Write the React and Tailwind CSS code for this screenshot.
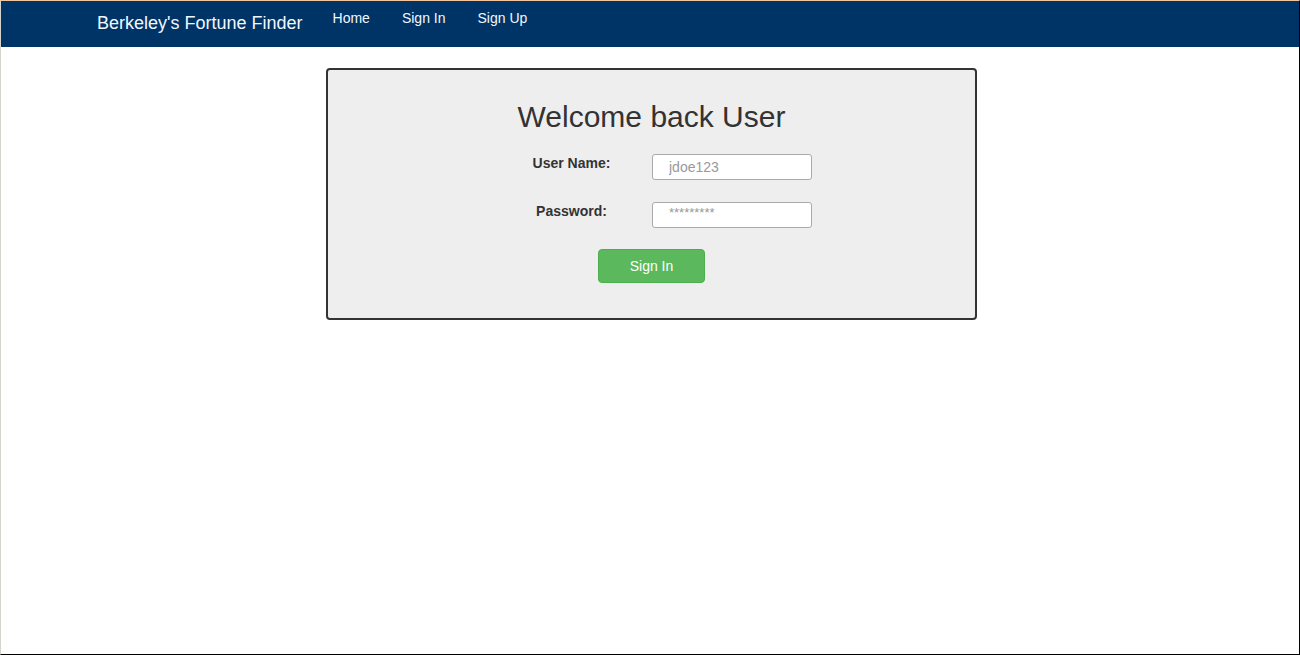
export default function App() {
  return (
    <div
      className="h-[655px] border-t border-l border-r border-b border-t-[#f2c49e] border-l-[#d6d2ce] border-r-black border-b-black bg-white text-[#333]"
      style={{ fontFamily: '"Liberation Sans", Arial, sans-serif' }}
    >
      {/* ================= NAVBAR ================= */}
      <nav className="h-[46px] bg-[#003366] flex items-start">
        <div className="pl-[96px] pt-[11px] text-[18px] leading-[22px] text-[#f0f8ff]">
          Berkeley's Fortune Finder
        </div>
        <div className="flex gap-[32px] ml-[30px] pt-[7px] text-[14px] leading-[20px] text-[#f0f8ff]">
          <span>Home</span>
          <span>Sign In</span>
          <span>Sign Up</span>
        </div>
      </nav>

      {/* ================= SIGN IN CARD ================= */}
      <div className="pl-[3px] pt-[21px]">
        <div className="mx-auto w-[651px] h-[252px] bg-[#eeeeee] border-2 border-[#333] rounded-[4px] pt-[30px]">
          <h2 className="text-center text-[30px] leading-[33px] text-[#333]">
            Welcome back User
          </h2>

          <div className="flex justify-center mt-[21px]">
            <label className="w-[161px] text-center text-[14px] font-bold leading-[16px] pt-[1px]">
              User Name:
            </label>
            <input
              className="w-[160px] h-[26px] bg-white border border-[#a9a9a9] rounded-[3px] pl-[16px] text-[14px] placeholder-[#999]"
              placeholder="jdoe123"
            />
          </div>

          <div className="flex justify-center mt-[22px]">
            <label className="w-[161px] text-center text-[14px] font-bold leading-[16px] pt-[1px]">
              Password:
            </label>
            <input
              className="w-[160px] h-[26px] bg-white border border-[#a9a9a9] rounded-[3px] pl-[16px] pb-[5px] text-[13px] placeholder-[#999]"
              placeholder="*********"
            />
          </div>

          <div className="flex justify-center mt-[21px]">
            <button className="w-[107px] h-[34px] bg-[#5cb85c] border border-[#4cae4c] rounded-[4px] text-white text-[14px]">
              Sign In
            </button>
          </div>
        </div>
      </div>
    </div>
  );
}
